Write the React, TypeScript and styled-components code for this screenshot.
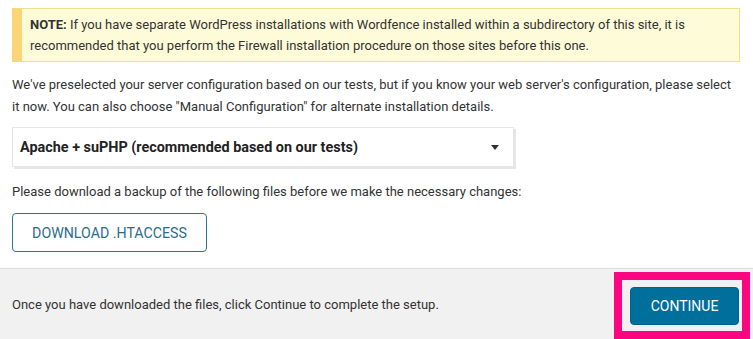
import styled, { createGlobalStyle } from 'styled-components';

const GlobalStyle = createGlobalStyle`
  html, body {
    margin: 0;
    padding: 0;
    background: #fff;
  }
  body {
    font-family: Roboto, "Liberation Sans", sans-serif;
    font-size: 13px;
    color: #333;
  }
`;

const Page = styled.div`
  width: 753px;
  height: 339px;
  display: flex;
  flex-direction: column;
  overflow: hidden;
`;

const Body = styled.div`
  flex: 1;
  padding: 8px 13px 0 12px;
  display: flex;
  flex-direction: column;
`;

const Notice = styled.div`
  background: #fefbd9;
  border: 1px solid #f3e08f;
  border-left: 10px solid #fcd576;
  padding: 5px 8px;
  line-height: 21px;
`;

const Para = styled.p<{ $top?: number }>`
  margin: ${(p) => p.$top ?? 0}px 0 0;
  line-height: 22px;
`;

const SelectBox = styled.div`
  margin-top: 9px;
  width: 502px;
  height: 40px;
  border: 1px solid #e6e6e6;
  box-shadow: 2px 2px 0 #e6e6e6;
  display: flex;
  align-items: center;
  justify-content: space-between;
  padding: 0 14px 0 7px;
  box-sizing: border-box;
  font-weight: 700;
  font-size: 14.4px;
  color: #222;
`;

const Caret = styled.span`
  width: 0;
  height: 0;
  border-left: 4px solid transparent;
  border-right: 4px solid transparent;
  border-top: 5px solid #333;
`;

const OutlineButton = styled.button`
  margin-top: 10px;
  align-self: flex-start;
  height: 39px;
  width: 195px;
  background: #fff;
  border: 1px solid #2b7399;
  border-radius: 4px;
  color: #2b6d8e;
  font-family: Roboto, "Liberation Sans", sans-serif;
  font-size: 14.2px;
  text-transform: uppercase;
`;

const Footer = styled.div`
  height: 71px;
  box-sizing: border-box;
  background: #f1f1f1;
  border-top: 1px solid #dedede;
  display: flex;
  align-items: center;
  justify-content: space-between;
  padding: 0 3px 0 12px;
`;

const Highlight = styled.div`
  border: 8px solid #fb0580;
  padding: 7px 3px 6px 8px;
  margin-top: 2px;
  display: flex;
`;

const PrimaryButton = styled.button`
  width: 109px;
  height: 38px;
  background: #006f9c;
  border: 1px solid #00628a;
  border-radius: 4px;
  color: #fff;
  font-family: Roboto, "Liberation Sans", sans-serif;
  font-size: 14px;
  text-transform: uppercase;
`;

export default function App() {
  return (
    <>
      <GlobalStyle />
      <Page>
        <Body>
          <Notice>
            <strong>NOTE:</strong> If you have separate WordPress installations with Wordfence installed
            within a subdirectory of this site, it is recommended that you perform the Firewall
            installation procedure on those sites before this one.
          </Notice>
          <Para $top={12}>
            We've preselected your server configuration based on our tests, but if you know your web
            server's configuration, please select it now. You can also choose "Manual Configuration"
            for alternate installation details.
          </Para>
          <SelectBox>
            <span>Apache + suPHP (recommended based on our tests)</span>
            <Caret />
          </SelectBox>
          <Para $top={14}>
            Please download a backup of the following files before we make the necessary changes:
          </Para>
          <OutlineButton>Download .htaccess</OutlineButton>
        </Body>
        <Footer>
          <span>Once you have downloaded the files, click Continue to complete the setup.</span>
          <Highlight>
            <PrimaryButton>Continue</PrimaryButton>
          </Highlight>
        </Footer>
      </Page>
    </>
  );
}
